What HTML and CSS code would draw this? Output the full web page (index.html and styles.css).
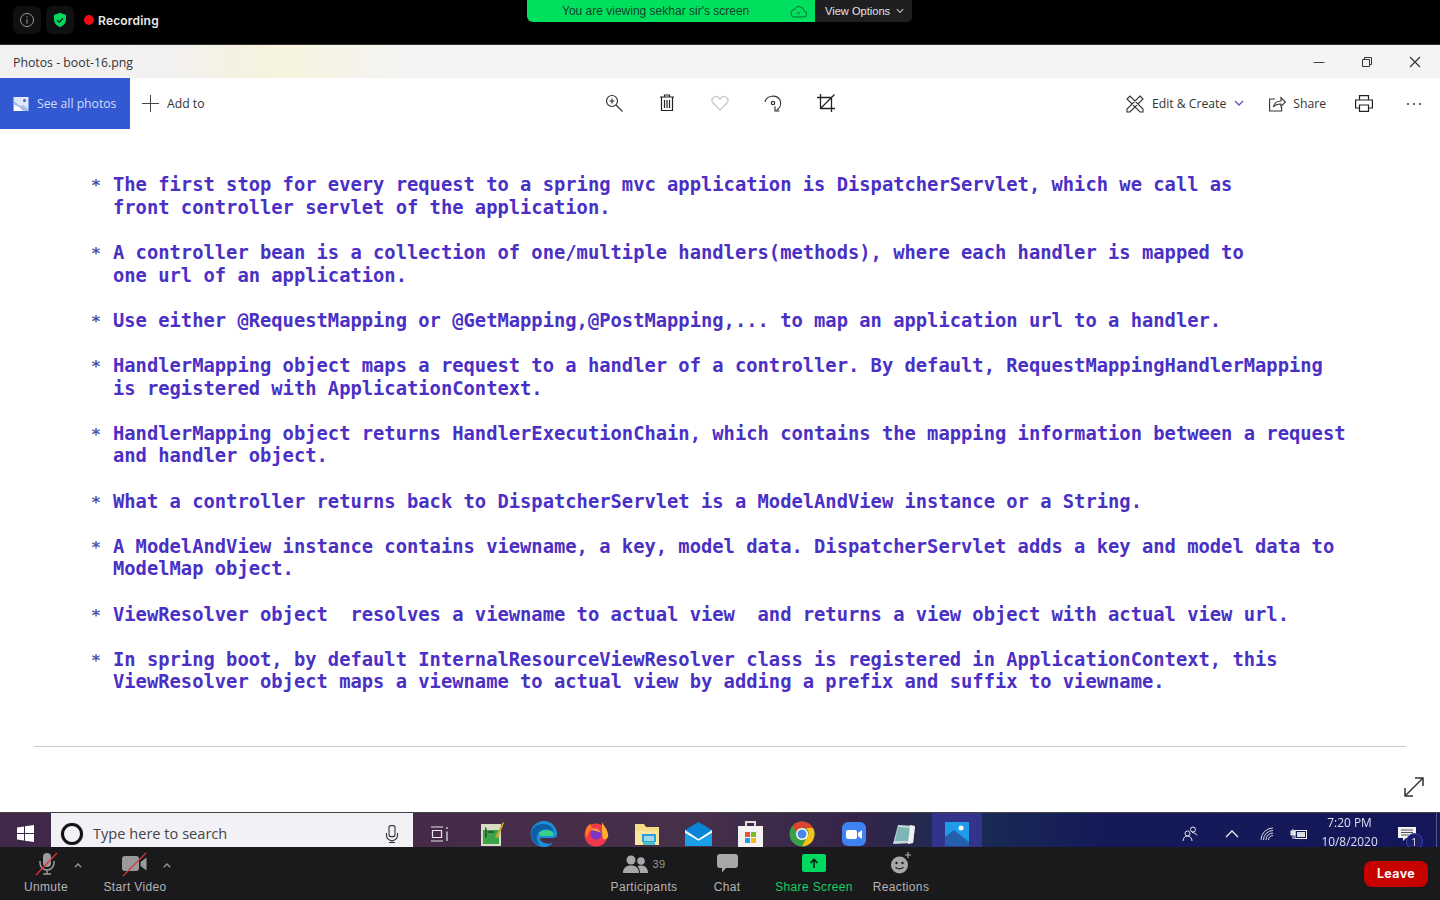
FILE: index.html
```html
<!DOCTYPE html>
<html lang="en">
<head>
<meta charset="utf-8">
<title>Photos - boot-16.png</title>
<link rel="stylesheet" href="styles.css">
</head>
<body>
<div class="page">
  <header class="meeting-top">
    <div class="meeting-left">
      <span class="chip"><svg width="16" height="16" viewBox="0 0 16 16" fill="none" stroke="#9a9a9a"><circle cx="8" cy="8" r="6.5"/><path d="M8 7v4.500M8 4.400v1.300"/></svg></span>
      <span class="chip"><svg width="16" height="16" viewBox="0 0 16 16"><path d="M8 .8l6 2.200v4.600c0 3.600-2.500 6.200-6 7.600-3.500-1.400-6-4-6-7.600V3z" fill="#00d95f"/><path d="M5 8l2.200 2.200L11 6.400" fill="none" stroke="#06351b" stroke-width="1.500"/></svg></span>
      <span class="rec-dot"></span><span class="rec-label">Recording</span>
    </div>
    <div class="view-banner">
      <div class="view-green">
        <span class="view-text">You are viewing sekhar sir's screen</span>
        <svg class="view-cloud" width="17" height="13" viewBox="0 0 17 13" fill="none" stroke="#0c6b36"><path d="M4 12h9.500a3 3 0 0 0 .5-6A5 5 0 0 0 4.500 4.500 3.800 3.800 0 0 0 4 12z"/><circle cx="8.500" cy="8" r="1.500" fill="#3f8c4f" stroke="none"/></svg>
      </div>
      <div class="view-options">View Options<svg width="8" height="6" viewBox="0 0 8 6" fill="none" stroke="#b8b8b8" stroke-width="1.200"><path d="M.8 1.200L4 4.400l3.200-3.200"/></svg></div>
    </div>
    <div></div>
  </header>

  <div class="titlebar">
    <span class="title-text">Photos - boot-16.png</span>
    <div class="window-btns">
      <svg width="12" height="12" viewBox="0 0 12 12" fill="none" stroke="#444"><path d="M.5 6.500h11"/></svg>
      <svg width="12" height="12" viewBox="0 0 12 12" fill="none" stroke="#333"><path d="M1.500 3.500h7v7h-7zM3.500 3.500v-2h7v7h-2"/></svg>
      <svg width="12" height="12" viewBox="0 0 12 12" fill="none" stroke="#333" stroke-width="1.200"><path d="M1 1l10 10M11 1L1 11"/></svg>
    </div>
  </div>

  <nav class="toolbar">
    <div class="tool-left">
      <div class="see-all">
        <svg width="16" height="16" viewBox="0 0 16 16"><rect x=".5" y="1" width="15" height="14" fill="#dfe7fa"/><path d="M1 5l6 5 3-1 5 4v2H1z" fill="#a9bdf0"/><circle cx="11.500" cy="4.500" r="1.500" fill="#3f62d6"/><path d="M1 9l5 2 4 4H1z" fill="#fff"/></svg>
        <span>See all photos</span>
      </div>
      <div class="add-to">
        <svg width="17" height="17" viewBox="0 0 17 17" stroke="#444" fill="none"><path d="M8.500 0v17M0 8.500h17"/></svg>
        <span>Add to</span>
      </div>
    </div>
    <div class="tool-center">
      <svg width="18" height="18" viewBox="0 0 18 18" fill="none" stroke="#333" stroke-width="1.200"><circle cx="7" cy="7" r="5.500"/><path d="M11 11l6.500 6.500M4.500 7h5M7 4.500v5"/></svg>
      <svg width="14" height="17" viewBox="0 0 14 17" fill="none" stroke="#222" stroke-width="1.200"><path d="M0 3h14M4.500 3V1h5v2M1.500 3v13.500h11V3M4.500 6v8M7 6v8M9.500 6v8"/></svg>
      <svg class="heart" width="18" height="16" viewBox="0 0 18 16" fill="none" stroke="#c9c9c9" stroke-width="1.300"><path d="M9 15L1.800 7.800C-1 4.500 3.800-.5 7.400 2.300L9 4l1.600-1.700C14.200-.5 19 4.500 16.200 7.800z"/></svg>
      <svg width="18" height="18" viewBox="0 0 18 18" fill="none" stroke="#333" stroke-width="1.200"><path d="M1 8a8 7 0 0 1 15-2c1.600 3.800 0 8-3.500 10.400"/><path d="M11 12.500v4.500h4.500"/><circle cx="9" cy="9" r="1.700"/></svg>
      <svg width="18" height="18" viewBox="0 0 18 18" fill="none" stroke="#222" stroke-width="1.300"><path d="M3.500 0v14.500H18M0 3.500h14.500V18M3.500 14.500L17.500 .5"/></svg>
    </div>
    <div class="tool-right">
      <div class="tool-action edit">
        <svg width="18" height="18" viewBox="0 0 18 18" fill="none" stroke="#333" stroke-width="1.100"><path d="M1 4l3-3 13 13v3h-3zM14 1l3 3L4 17l-3 0 0-3z"/></svg>
        <span>Edit &amp; Create</span>
        <svg class="chev" width="10" height="7" viewBox="0 0 10 7" fill="none" stroke="#5b55c4" stroke-width="1.300"><path d="M1 1l4 4 4-4"/></svg>
      </div>
      <div class="tool-action share">
        <svg width="17" height="16" viewBox="0 0 17 16" fill="none" stroke="#333" stroke-width="1.100"><path d="M6 3H.6v12h12v-4M4.500 11c.5-4 4-6 7.500-6V1.500L16.500 6 12 10.500V8c-3 0-6 .8-7.500 3z"/></svg>
        <span>Share</span>
      </div>
      <svg class="print" width="18" height="17" viewBox="0 0 18 17" fill="none" stroke="#222" stroke-width="1.200"><path d="M4.500 5V.6h9V5M4.500 13H.6V5h16.800v8h-3.900M4.500 10h9v6.400h-9z"/></svg>
      <div class="more"><i></i><i></i><i></i></div>
    </div>
  </nav>

  <main class="viewer">
    <ul class="notes">
      <li>The first stop for every request to a spring mvc application is DispatcherServlet, which we call as
front controller servlet of the application.</li>
      <li>A controller bean is a collection of one/multiple handlers(methods), where each handler is mapped to
one url of an application.</li>
      <li>Use either @RequestMapping or @GetMapping,@PostMapping,... to map an application url to a handler.</li>
      <li>HandlerMapping object maps a request to a handler of a controller. By default, RequestMappingHandlerMapping
is registered with ApplicationContext.</li>
      <li>HandlerMapping object returns HandlerExecutionChain, which contains the mapping information between a request
and handler object.</li>
      <li>What a controller returns back to DispatcherServlet is a ModelAndView instance or a String.</li>
      <li>A ModelAndView instance contains viewname, a key, model data. DispatcherServlet adds a key and model data to
ModelMap object.</li>
      <li>ViewResolver object  resolves a viewname to actual view  and returns a view object with actual view url.</li>
      <li>In spring boot, by default InternalResourceViewResolver class is registered in ApplicationContext, this
ViewResolver object maps a viewname to actual view by adding a prefix and suffix to viewname.</li>
    </ul>
    <div class="rule"></div>
    <svg class="expand" width="20" height="20" viewBox="0 0 20 20" fill="none" stroke="#333" stroke-width="1.500"><path d="M1 19L19 1M11 1h8v8M1 11v8h8"/></svg>
  </main>

  <div class="taskbar">
    <div class="start"><svg width="17" height="17" viewBox="0 0 17 17" fill="#fff"><path d="M0 2.500l7-1v6.500H0zM8 1.300L17 0v8H8zM0 9h7v6.500l-7-1zM8 9h9v8l-9-1.300z"/></svg></div>
    <div class="search">
      <span class="cortana"></span>
      <span class="search-text">Type here to search</span>
      <svg width="14" height="18" viewBox="0 0 14 18" fill="none" stroke="#333" stroke-width="1.100"><rect x="4" y=".6" width="6" height="11" rx="2"/><path d="M1.500 8v2.500a5.500 5 0 0 0 11 0V8M7 15.500v2M4 17.500h6"/></svg>
    </div>
    <div class="slot slot-tasks"><svg width="20" height="16" viewBox="0 0 20 16" fill="none" stroke="#e8e6ee" stroke-width="1.200"><path d="M1 1h12M1 15h12M2.500 4.500h9v7h-9zM17 1v2M17 5.500v9.500"/></svg></div>
    <div class="slot"><svg width="24" height="26" viewBox="0 0 24 26"><rect x="1" y="3" width="20" height="22" fill="#d9dcc4"/><rect x="3" y="9" width="16" height="14" fill="#3aa548"/><path d="M5 7h1v9H5M8 11h6" stroke="#222" fill="none"/><path d="M15 16L23 1l1 1-6 15z" fill="#c9a82e"/></svg></div>
    <div class="slot"><svg width="28" height="28" viewBox="0 0 28 28"><path d="M14 1a13 13 0 0 1 13 14c0 2-2 3-5 3H10c0 4 6 7 13 5a13 13 0 1 1-9-22z" fill="#1c8fd6"/><path d="M1.500 12C3 6 8 4 13 4c6 0 10 3 11 8-4-3-11-4-15 0-3 3-3 9 1 13C4 24 0 18 1.500 12z" fill="#0f5fa6"/><path d="M9 13c2-4 12-4 14 0 1 2 0 3-1 3H10z" fill="#39d08c"/></svg></div>
    <div class="slot"><svg width="26" height="26" viewBox="0 0 26 26"><circle cx="13" cy="14" r="11.500" fill="#f0394c"/><path d="M19 1c1 3 5 6 6 12 1 4-2 6-5 5-1-5-1-10-1-17z" fill="#ffb02a"/><path d="M4 6c1-2 3-3 4-3-1 3 1 4 3 4-4 2-6 5-7 10-2-3-2-8 0-11z" fill="#ff7a2c"/><circle cx="13" cy="13" r="5.500" fill="#7a35c8"/><path d="M8 9c4-3 9-1 10 3-3-2-6-2-10-3z" fill="#ff9a2c"/></svg></div>
    <div class="slot"><svg width="24" height="22" viewBox="0 0 24 22"><path d="M0 1h9l2 3h13v18H0z" fill="#f5dc86"/><path d="M0 8h24v14H0z" fill="#f8e6a0"/><rect x="7" y="11" width="14" height="8" fill="#2d9fd8"/><rect x="9" y="13" width="10" height="5" fill="#9fd8ee"/><rect x="8" y="19" width="12" height="3" fill="#4ec2c9"/></svg></div>
    <div class="slot"><svg width="27" height="24" viewBox="0 0 27 24"><path d="M0 8L13.500 0 27 8v16H0z" fill="#0a84d6"/><path d="M0 8l13.500 9L27 8v3L13.500 19 0 11z" fill="#fff"/><path d="M0 11l13.500 8L27 11v13H0z" fill="#1aa0e8"/></svg></div>
    <div class="slot"><svg width="25" height="27" viewBox="0 0 25 27"><path d="M8 7V2h9v5" fill="none" stroke="#ddd" stroke-width="2"/><rect y="6" width="25" height="21" fill="#f5f2f4"/><rect x="7" y="12" width="5" height="5" fill="#e8542c"/><rect x="13" y="12" width="5" height="5" fill="#7fb92a"/><rect x="7" y="18" width="5" height="5" fill="#1d9fe0"/><rect x="13" y="18" width="5" height="5" fill="#f6b81a"/></svg></div>
    <div class="slot"><svg width="26" height="26" viewBox="0 0 26 26"><circle cx="13" cy="13" r="12.500" fill="#3aa04a"/><path d="M13 .5A12.500 12.500 0 0 1 24 7H13a6 6 0 0 0-5.500 3.500L3.500 5A12.500 12.500 0 0 1 13 .5z" fill="#e0432f"/><path d="M24 7a12.500 12.500 0 0 1-11 18.500L18 16a6 6 0 0 0-1-9z" fill="#f6c21a"/><circle cx="13" cy="13" r="6" fill="#fff"/><circle cx="13" cy="13" r="4.500" fill="#4a86e8"/></svg></div>
    <div class="slot"><svg width="24" height="24" viewBox="0 0 24 24"><rect width="24" height="24" rx="6" fill="#3f83f2"/><rect x="4" y="8" width="11" height="9" rx="2" fill="#fff"/><path d="M16 11l4-3v9l-4-3z" fill="#fff"/></svg></div>
    <div class="slot"><svg width="24" height="24" viewBox="0 0 24 24"><path d="M5 3l17 1-2 17-20 1z" fill="#c8d8da"/><path d="M5 5l15 1-2 13H2z" fill="#7fb6b5"/><path d="M17 3l5 1-2 17-5 1z" fill="#eef1f0"/></svg></div>
    <div class="slot active"><svg width="24" height="24" viewBox="0 0 24 24"><rect width="24" height="24" fill="#1e9be8"/><circle cx="16" cy="6" r="2.500" fill="#fff"/><path d="M0 15l9-7 15 12v4H0z" fill="#245fae"/></svg></div>
    <div class="tray">
      <svg class="people" width="16" height="16" viewBox="0 0 16 16" fill="none" stroke="#e6e6ee"><circle cx="11" cy="3.500" r="2.500"/><circle cx="5.500" cy="7.500" r="2.500"/><path d="M1 15c0-3 2-5 4.500-5S10 12 10 15M10 6.500c2 0 4 1 5 3"/></svg>
      <svg class="caret-up" width="14" height="8" viewBox="0 0 14 8" fill="none" stroke="#eee" stroke-width="1.300"><path d="M1 7l6-6 6 6"/></svg>
      <svg class="wifi" width="14" height="14" viewBox="0 0 14 14" fill="none" stroke="#d8d8e4"><path d="M1 13A12 12 0 0 1 13 1M3.500 13A9.500 9.500 0 0 1 13 3.500M6 13a7 7 0 0 1 7-7M8.500 13A4.500 4.500 0 0 1 13 8.500"/></svg>
      <svg class="battery" width="18" height="12" viewBox="0 0 18 12" fill="none" stroke="#eee"><path d="M3 3V1M3 8v3"/><rect x="1" y="3" width="4" height="4" fill="#ddd"/><rect x="5" y="2.500" width="11.500" height="8"/><rect x="7" y="4" width="8" height="5" fill="#ddd" stroke="none"/></svg>
      <div class="clock"><span>7:20 PM</span><span>10/8/2020</span></div>
      <div class="notif"><svg width="18" height="14" viewBox="0 0 18 14" fill="#f2f2f2"><path d="M0 0h18v11H8l-3 3v-3H0z"/><path d="M3 3h12M3 5.500h12M3 8h8" stroke="#555"/></svg><span class="badge">1</span></div>
      <div class="tray-edge"></div>
    </div>
  </div>

  <footer class="controls">
    <div class="controls-left">
      <div class="ctl ctl-mute">
        <svg width="24" height="24" viewBox="0 0 24 24"><rect x="9" y="1" width="8" height="14" rx="4" fill="#9a9a9a"/><path d="M6 9v2a7 7 0 0 0 14 0V9M13 18v4M9 22h8" fill="none" stroke="#9a9a9a" stroke-width="1.500"/><path d="M2 23L23 1" stroke="#d8343a" stroke-width="1.300"/></svg>
        <span>Unmute</span>
        <svg class="ctl-caret" width="8" height="5" viewBox="0 0 8 5" fill="none" stroke="#9a9a9a" stroke-width="1.300"><path d="M.8 4.200L4 1l3.200 3.200"/></svg>
      </div>
      <div class="ctl ctl-video">
        <svg width="26" height="24" viewBox="0 0 26 24"><rect y="4" width="17" height="15" rx="3" fill="#9a9a9a"/><path d="M18.500 10l6-4.500v13l-6-4.500z" fill="#9a9a9a"/><path d="M1 24L24 1" stroke="#d8343a" stroke-width="1.300"/></svg>
        <span>Start Video</span>
        <svg class="ctl-caret" width="8" height="5" viewBox="0 0 8 5" fill="none" stroke="#9a9a9a" stroke-width="1.300"><path d="M.8 4.200L4 1l3.200 3.200"/></svg>
      </div>
    </div>
    <div class="controls-center">
      <div class="ctl ctl-part">
        <div class="part-icon"><svg width="25" height="19" viewBox="0 0 25 19" fill="#a8a8a8"><circle cx="8" cy="5" r="4.500"/><circle cx="18" cy="6" r="3.800"/><path d="M0 18c0-5 3-7.500 8-7.500s8 2.500 8 7.500zM17 18c0-3-1-5-2.500-6.500 1-.8 2.300-1 3.500-1 4 0 7 2.500 7 7.500z"/></svg><b>39</b></div>
        <span>Participants</span>
      </div>
      <div class="ctl ctl-chat">
        <svg width="21" height="19" viewBox="0 0 21 19" fill="#a8a8a8"><path d="M3 0h15a3 3 0 0 1 3 3v8a3 3 0 0 1-3 3H9l-4 4.500V14H3a3 3 0 0 1-3-3V3a3 3 0 0 1 3-3z"/></svg>
        <span>Chat</span>
      </div>
      <div class="ctl ctl-share">
        <div class="share-icon"><svg width="10" height="10" viewBox="0 0 10 10" fill="none" stroke="#0a1a10" stroke-width="1.600"><path d="M5 10V1.500M1.500 5L5 1.500 8.500 5"/></svg></div>
        <span>Share Screen</span>
      </div>
      <div class="ctl ctl-react">
        <svg width="22" height="22" viewBox="0 0 22 22"><circle cx="9.500" cy="13" r="8.500" fill="#a8a8a8"/><circle cx="6.500" cy="11" r="1.200" fill="#1a1a1c"/><circle cx="12.500" cy="11" r="1.200" fill="#1a1a1c"/><path d="M5.500 15c1.500 2.500 6.500 2.500 8 0" fill="none" stroke="#1a1a1c" stroke-width="1.200"/><path d="M18 0v6M15 3h6" stroke="#a8a8a8" stroke-width="1.200"/></svg>
        <span>Reactions</span>
      </div>
    </div>
    <div class="leave">Leave</div>
  </footer>
</div>
</body>
</html>
```

FILE: styles.css
```css
* { box-sizing: border-box; }
html, body { margin: 0; padding: 0; height: 100%; overflow: hidden; background: #000; }
svg { display: block; flex: none; }

.page { width: 1440px; height: 900px; display: flex; flex-direction: column; overflow: hidden; filter: blur(.35px); }

/* meeting top strip */
.meeting-top { height: 45px; flex: none; background: #000; display: grid; grid-template-columns: 527px 385px 1fr; border-bottom: 1px solid #333; }
.meeting-left { display: flex; align-items: center; padding: 0 0 1px 13px; gap: 5px; height: 41px; }
.chip { width: 28px; height: 28px; border-radius: 7px; background: #0f1012; display: flex; align-items: center; justify-content: center; }
.rec-dot { width: 10px; height: 10px; border-radius: 50%; background: #f30d12; margin-left: 5px; }
.rec-label { font: 600 12px "Inter", "Liberation Sans", sans-serif; letter-spacing: .2px; color: #e8e8e8; margin-left: -1px; }
.view-banner { display: flex; height: 22px; font: 12px "Liberation Sans", Arial, sans-serif; }
.view-green { width: 288px; background: #00e05f; color: #15422b; border-radius: 0 0 0 6px; display: flex; align-items: center; padding-left: 35px; height: 22px; }
.view-text { width: 228px; padding-bottom: 1px; }
.view-options { width: 97px; height: 22px; background: #1f1f22; color: #e4e4e4; border-radius: 0 0 5px 0; display: flex; align-items: center; gap: 6px; padding-left: 10px; font-size: 11.100px; }

/* window title */
.titlebar { height: 33px; flex: none; display: flex; align-items: center; justify-content: space-between; padding: 1px 19px 0 13px; background: linear-gradient(90deg, #f1f1f2 0, #f3f1f0 170px, #f5f2e2 240px, #f6f4de 290px, #f5f3e8 340px, #f4f4f6 420px, #f4f4f7 100%); }
.title-text { font: 12.300px "Open Sans", sans-serif; color: #333; }
.window-btns { display: flex; gap: 36px; align-items: center; }

/* photo toolbar */
.toolbar { height: 51px; flex: none; background: #fff; display: flex; font: 12.200px "Open Sans", sans-serif; color: #333; }
.tool-left { flex: 1 1 0; display: flex; align-items: stretch; }
.see-all { width: 130px; background: #3359d2; color: #d3def9; display: flex; align-items: center; gap: 8px; padding-left: 13px; }
.add-to { display: flex; align-items: center; gap: 8px; padding-left: 12px; }
.tool-center { display: flex; align-items: center; gap: 35px; padding-bottom: 2px; }
.tool-center > svg { width: 18px; }
.tool-right { flex: 1 1 0; display: flex; align-items: center; justify-content: flex-end; }
.tool-action { display: flex; align-items: center; gap: 8px; }
.edit { margin-right: 25px; }
.share { margin-right: 29px; gap: 7px; }
.print { margin-right: 34px; }
.more { display: flex; gap: 4px; margin-right: 19px; }
.more i { width: 2px; height: 2px; background: #333; border-radius: 50%; display: block; }

/* image viewer */
.viewer { height: 683px; flex: none; background: #fff; position: relative; padding: 45.300px 34px 0; overflow: hidden; }
.notes { margin: 0; padding: 0 0 0 79px; list-style: none; font: 700 18.800px/22.600px "DejaVu Sans Mono", monospace; color: #4a30c4; height: 571.700px; }
.notes li { margin-bottom: 22.600px; position: relative; white-space: pre; }
.notes li::before { content: "*"; position: absolute; left: -21.900px; top: 1px; font-size: 16.500px; color: #4f56a8; }
.rule { height: 1px; background: #c9c9c9; }
.expand { position: absolute; left: 1404px; top: 648px; }

/* windows taskbar */
.taskbar { height: 35px; flex: none; display: flex; align-items: flex-start; border-top: 1px solid #444; background: linear-gradient(90deg, #3f2849 0, #452b48 420px, #46304a 700px, #34244a 860px, #1b2d52 960px, #141a58 1100px, #13175a 100%); }
.start { width: 51px; height: 41px; display: flex; align-items: center; justify-content: center; }
.search { width: 362px; height: 41px; background: #f2f1f6; display: flex; align-items: center; padding: 0 14px 0 10px; font: 14.600px "Open Sans", sans-serif; color: #444; }
.cortana { width: 22px; height: 22px; border: 3px solid #111; border-radius: 50%; box-shadow: 0 0 1px #555; }
.search-text { flex: 1; padding: 0 0 2px 10px; }
.slot { width: 51.600px; height: 41px; display: flex; align-items: center; justify-content: center; }
.slot-tasks { width: 53.600px; }
.slot.active { width: 50px; margin-left: 1px; background: #32338a; }
.tray { flex: 1; display: flex; align-items: center; height: 41px; color: #dfe0ea; position: relative; }
.people { margin-left: 200px; }
.caret-up { margin-left: 27px; }
.wifi { margin-left: 21px; }
.battery { margin-left: 16px; }
.clock { width: 80px; margin-left: 1.600px; padding-bottom: 3px; display: flex; flex-direction: column; align-items: center; font: 11.900px/19px "Open Sans", sans-serif; }
.notif { position: relative; margin-left: 8px; }
.badge { position: absolute; left: 8px; top: 6px; width: 17px; height: 17px; border-radius: 50%; background: #1b1e6c; border: 1px solid #3c4aa8; color: #ddd; font: 11px/15px "Open Sans", sans-serif; text-align: center; }
.tray-edge { position: absolute; left: 454px; top: 0; width: 1px; height: 34px; background: #555a8a; }

/* meeting controls */
.controls { height: 53px; flex: none; background: #1a1a1c; display: flex; font: 12px "Liberation Sans", Arial, sans-serif; letter-spacing: .35px; color: #b4b4b4; position: relative; z-index: 1; }
.ctl { position: relative; display: flex; flex-direction: column; align-items: center; padding-top: 5px; height: 53px; white-space: nowrap; }
.ctl > span { position: absolute; top: 33px; }
.ctl-caret { position: absolute; left: 60px; top: 16px; }
.controls-left { display: flex; width: 610px; }
.ctl-mute { width: 64px; margin-left: 14px; }
.ctl-video { width: 66px; margin-left: 24px; }
.ctl-video .ctl-caret { left: 61px; }
.controls-center { display: flex; flex: 1; }
.ctl-part { width: 68px; }
.part-icon { display: flex; align-items: center; gap: 5px; font-size: 11px; height: 24px; }
.part-icon b { font-weight: 400; color: #999; }
.ctl-chat { width: 36px; margin-left: 31px; padding-top: 7px; }
.ctl-share { width: 76px; margin-left: 31px; padding-top: 7px; color: #14d05c; }
.share-icon { width: 24px; height: 18px; border-radius: 2px; background: #00d95f; display: flex; align-items: center; justify-content: center; }
.ctl-react { width: 58px; margin-left: 20px; }
.leave { position: absolute; left: 1364px; top: 14px; width: 64px; height: 26px; border-radius: 8px; background: #c70000; color: #f6f6f6; font: 700 12.500px/26px "Inter", sans-serif; text-align: center; }
```
